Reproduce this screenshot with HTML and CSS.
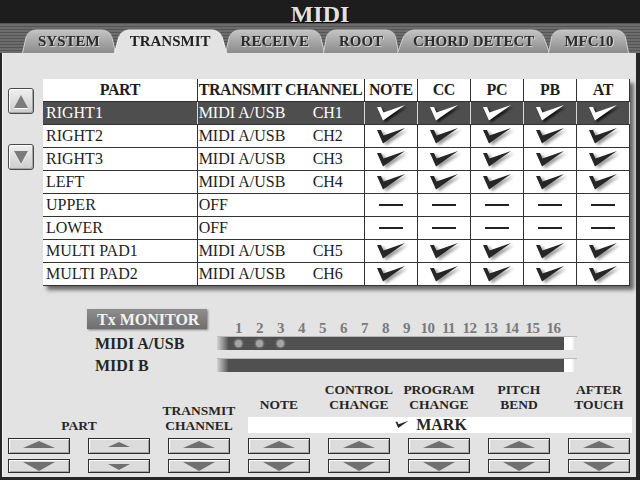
FILE: index.html
```html
<!DOCTYPE html>
<html>
<head>
<meta charset="utf-8">
<title>MIDI</title>
<link rel="stylesheet" href="styles.css">
</head>
<body>
<svg class="defs" width="0" height="0" aria-hidden="true">
  <defs>
    <path id="chk" d="M1 3 L5 3 L7.5 8.5 L29 1 L7 16.5 Z"/>
  </defs>
</svg>
<div class="screen">
  <header class="title">MIDI</header>
  <nav class="tabs">
    <div class="tab">SYSTEM</div>
    <div class="tab active">TRANSMIT</div>
    <div class="tab">RECEIVE</div>
    <div class="tab">ROOT</div>
    <div class="tab">CHORD DETECT</div>
    <div class="tab">MFC10</div>
  </nav>
  <main class="panel">
    <div class="upper">
      <div class="scroll">
        <div class="sbtn sup"></div>
        <div class="sbtn sdn"></div>
      </div>
      <table class="grid">
        <colgroup>
          <col class="c-part"><col class="c-ch"><col class="c-k"><col class="c-k"><col class="c-k"><col class="c-k"><col class="c-k">
        </colgroup>
        <thead>
          <tr><th class="h-part">PART</th><th class="h-ch">TRANSMIT CHANNEL</th><th>NOTE</th><th>CC</th><th>PC</th><th>PB</th><th>AT</th></tr>
        </thead>
        <tbody>
          <tr class="sel"><td class="part">RIGHT1</td><td class="ch"><span class="port">MIDI A/USB</span>CH1</td>
            <td><svg class="ck" viewBox="0 0 30 18"><use href="#chk"/></svg></td><td><svg class="ck" viewBox="0 0 30 18"><use href="#chk"/></svg></td><td><svg class="ck" viewBox="0 0 30 18"><use href="#chk"/></svg></td><td><svg class="ck" viewBox="0 0 30 18"><use href="#chk"/></svg></td><td><svg class="ck" viewBox="0 0 30 18"><use href="#chk"/></svg></td></tr>
          <tr><td class="part">RIGHT2</td><td class="ch"><span class="port">MIDI A/USB</span>CH2</td>
            <td><svg class="ck" viewBox="0 0 30 18"><use href="#chk"/></svg></td><td><svg class="ck" viewBox="0 0 30 18"><use href="#chk"/></svg></td><td><svg class="ck" viewBox="0 0 30 18"><use href="#chk"/></svg></td><td><svg class="ck" viewBox="0 0 30 18"><use href="#chk"/></svg></td><td><svg class="ck" viewBox="0 0 30 18"><use href="#chk"/></svg></td></tr>
          <tr><td class="part">RIGHT3</td><td class="ch"><span class="port">MIDI A/USB</span>CH3</td>
            <td><svg class="ck" viewBox="0 0 30 18"><use href="#chk"/></svg></td><td><svg class="ck" viewBox="0 0 30 18"><use href="#chk"/></svg></td><td><svg class="ck" viewBox="0 0 30 18"><use href="#chk"/></svg></td><td><svg class="ck" viewBox="0 0 30 18"><use href="#chk"/></svg></td><td><svg class="ck" viewBox="0 0 30 18"><use href="#chk"/></svg></td></tr>
          <tr><td class="part">LEFT</td><td class="ch"><span class="port">MIDI A/USB</span>CH4</td>
            <td><svg class="ck" viewBox="0 0 30 18"><use href="#chk"/></svg></td><td><svg class="ck" viewBox="0 0 30 18"><use href="#chk"/></svg></td><td><svg class="ck" viewBox="0 0 30 18"><use href="#chk"/></svg></td><td><svg class="ck" viewBox="0 0 30 18"><use href="#chk"/></svg></td><td><svg class="ck" viewBox="0 0 30 18"><use href="#chk"/></svg></td></tr>
          <tr><td class="part">UPPER</td><td class="ch">OFF</td>
            <td><div class="dash"></div></td><td><div class="dash"></div></td><td><div class="dash"></div></td><td><div class="dash"></div></td><td><div class="dash"></div></td></tr>
          <tr><td class="part">LOWER</td><td class="ch">OFF</td>
            <td><div class="dash"></div></td><td><div class="dash"></div></td><td><div class="dash"></div></td><td><div class="dash"></div></td><td><div class="dash"></div></td></tr>
          <tr><td class="part">MULTI PAD1</td><td class="ch"><span class="port">MIDI A/USB</span>CH5</td>
            <td><svg class="ck" viewBox="0 0 30 18"><use href="#chk"/></svg></td><td><svg class="ck" viewBox="0 0 30 18"><use href="#chk"/></svg></td><td><svg class="ck" viewBox="0 0 30 18"><use href="#chk"/></svg></td><td><svg class="ck" viewBox="0 0 30 18"><use href="#chk"/></svg></td><td><svg class="ck" viewBox="0 0 30 18"><use href="#chk"/></svg></td></tr>
          <tr><td class="part">MULTI PAD2</td><td class="ch"><span class="port">MIDI A/USB</span>CH6</td>
            <td><svg class="ck" viewBox="0 0 30 18"><use href="#chk"/></svg></td><td><svg class="ck" viewBox="0 0 30 18"><use href="#chk"/></svg></td><td><svg class="ck" viewBox="0 0 30 18"><use href="#chk"/></svg></td><td><svg class="ck" viewBox="0 0 30 18"><use href="#chk"/></svg></td><td><svg class="ck" viewBox="0 0 30 18"><use href="#chk"/></svg></td></tr>
        </tbody>
      </table>
    </div>

    <section class="monitor">
      <div class="txlabel">Tx MONITOR</div>
      <div class="nums"><span>1</span><span>2</span><span>3</span><span>4</span><span>5</span><span>6</span><span>7</span><span>8</span><span>9</span><span>10</span><span>11</span><span>12</span><span>13</span><span>14</span><span>15</span><span>16</span></div>
      <div class="mlabel">MIDI A/USB</div>
      <div class="bar"><div class="cap"></div><div class="track"><i class="dot"></i><i class="dot"></i><i class="dot"></i></div><div class="end"></div></div>
      <div class="mlabel">MIDI B</div>
      <div class="bar"><div class="cap"></div><div class="track"></div><div class="end"></div></div>
    </section>

    <section class="controls">
      <div class="lbl l-part">PART</div>
      <div class="lbl l-tc">TRANSMIT<br>CHANNEL</div>
      <div class="lbl l-note">NOTE</div>
      <div class="lbl l-cc">CONTROL<br>CHANGE</div>
      <div class="lbl l-pc">PROGRAM<br>CHANGE</div>
      <div class="lbl l-pb">PITCH<br>BEND</div>
      <div class="lbl l-at">AFTER<br>TOUCH</div>
      <div class="mark"><svg class="mk" viewBox="0 0 30 18"><use href="#chk"/></svg><span>MARK</span></div>

      <div class="btn up"></div>
      <div class="btn up sm"></div>
      <div class="btn up"></div>
      <div class="btn up"></div>
      <div class="btn up"></div>
      <div class="btn up"></div>
      <div class="btn up"></div>
      <div class="btn up"></div>

      <div class="btn dn"></div>
      <div class="btn dn sm"></div>
      <div class="btn dn"></div>
      <div class="btn dn"></div>
      <div class="btn dn"></div>
      <div class="btn dn"></div>
      <div class="btn dn"></div>
      <div class="btn dn"></div>
    </section>
  </main>
</div>
</body>
</html>
```

FILE: styles.css
```css
* { box-sizing: border-box; }
html, body { margin: 0; padding: 0; }
body {
  width: 640px;
  height: 480px;
  overflow: hidden;
  background: #262626;
  font-family: "Liberation Serif", "Times New Roman", serif;
}
.defs { position: absolute; width: 0; height: 0; overflow: hidden; }

.screen { display: flex; flex-direction: column; height: 480px; }

.title {
  height: 23px;
  background: #1d1d1d;
  text-align: center;
  color: #e2e2e2;
  font-weight: bold;
  font-size: 24px;
  line-height: 28px;
  text-shadow: 1px 1px 0 #000;
}

.tabs {
  height: 30px;
  display: flex;
  align-items: flex-end;
  padding-left: 22px;
  background: repeating-linear-gradient(to bottom, #555 0 1px, #6c6c6c 1px 3px);
}
.tab {
  position: relative;
  z-index: 1;
  height: 27px;
  padding: 0 16px;
  margin-right: -2px;
  font-weight: bold;
  font-size: 15px;
  line-height: 31px;
  color: #2c2c2c;
  white-space: nowrap;
  text-shadow: 1px 1px 0 rgba(255,255,255,0.55);
}
.tab::before {
  content: "";
  position: absolute;
  inset: 0;
  z-index: -1;
  background: linear-gradient(#c4c4c4, #8c8c8c);
  border: 1px solid #d0d0d0;
  border-bottom: none;
  border-radius: 10px 10px 0 0;
  transform: perspective(40px) rotateX(11deg);
  transform-origin: bottom;
}
.tab.active { z-index: 3; color: #222; text-shadow: none; }
.tab.active::before { background: #e3e3e3; border-color: #f6f6f6; }

.panel {
  flex: 1;
  margin: 0 4px 3px 2px;
  background: #e3e3e3;
  border-left: 1px solid #f5f5f5;
  padding: 26px 4px 0 5px;
}

.upper { display: flex; gap: 9px; align-items: flex-start; }
.scroll { width: 26px; padding-top: 9px; display: flex; flex-direction: column; gap: 30px; }
.sbtn {
  width: 26px;
  height: 26px;
  border: 1px solid #4a4a4a;
  border-radius: 3px;
  background: linear-gradient(#efefef, #cdcdcd);
  box-shadow: inset 1px 1px 0 #fff, inset -1px -1px 0 #a4a4a4;
  display: flex;
  align-items: center;
  justify-content: center;
}
.sup::after {
  content: "";
  border-left: 7px solid transparent;
  border-right: 7px solid transparent;
  border-bottom: 13px solid #7c7c7c;
  filter: drop-shadow(0 1px 0 #fff);
}
.sdn::after {
  content: "";
  border-left: 7px solid transparent;
  border-right: 7px solid transparent;
  border-top: 13px solid #7c7c7c;
  filter: drop-shadow(0 1px 0 #fff);
}

.grid {
  border-collapse: collapse;
  table-layout: fixed;
  width: 587px;
  background: #fff;
  box-shadow: 4px 4px 4px rgba(0,0,0,0.55);
}
.c-part { width: 154px; }
.c-ch { width: 167px; }
.c-k { width: 53px; }
.grid th, .grid td {
  border: 1px solid #333;
  padding: 0;
  height: 23px;
  color: #1e1e1e;
  font-size: 16px;
  white-space: nowrap;
  overflow: hidden;
}
.grid th {
  height: 22px;
  border-top: none;
  font-weight: bold;
  letter-spacing: -0.4px;
  text-align: center;
  line-height: 20px;
}
.grid th.h-ch { text-align: left; padding-left: 1px; }
.grid th:first-child, .grid td:first-child { border-left: none; }
.grid td { font-weight: normal; line-height: 21px; }
.grid td.part { padding-left: 3px; }
.grid td.ch { padding-left: 1px; }
.port { display: inline-block; width: 114px; }
.sel td { background: #4e4e4e; color: #fff; border-left-color: #d8d8d8; border-right-color: #d8d8d8; }

.ck {
  display: block;
  width: 30px;
  height: 18px;
  margin: 0 auto;
  overflow: visible;
  fill: #262626;
  filter: drop-shadow(3px 2px 1.5px rgba(0,0,0,0.4));
}
.sel .ck { fill: #fff; filter: drop-shadow(2px 2px 1px rgba(0,0,0,0.75)); }
.dash { width: 24px; height: 2px; background: #222; margin: 0 auto; }

.monitor {
  margin: 23px 0 0 79px;
  display: grid;
  grid-template-columns: 130px 360px;
  grid-template-rows: 27px 22px 14px;
}
.txlabel {
  width: 120px;
  height: 20px;
  background: linear-gradient(#8e8e8e, #6e6e6e);
  box-shadow: 1px 1px 2px rgba(0,0,0,0.45);
  color: #f2f2f2;
  font-weight: bold;
  font-size: 16px;
  line-height: 21px;
  padding-left: 10px;
  white-space: nowrap;
}
.nums { display: flex; padding-left: 11px; align-self: end; padding-bottom: 1px; }
.nums span {
  width: 21px;
  text-align: center;
  font-weight: bold;
  font-size: 15px;
  line-height: 13px;
  color: #7a7a7a;
  letter-spacing: -0.5px;
}
.mlabel {
  padding-left: 8px;
  font-weight: bold;
  font-size: 16px;
  line-height: 15px;
  color: #262626;
  white-space: nowrap;
  align-self: start;
}
.bar { height: 14px; display: flex; align-self: start; border-top: 1px solid #b8b8b8; }
.bar .cap { width: 11px; background: linear-gradient(to right, #d4d4d4, #5a5a5a); }
.bar .track {
  width: 336px;
  background: #505050;
  display: flex;
  align-items: center;
  gap: 14px;
  padding-left: 7px;
}
.bar .end { width: 12px; background: linear-gradient(to right, #fff 60%, #dcdcdc); }
.dot {
  width: 7px;
  height: 7px;
  border-radius: 50%;
  background: #a4a4a4;
  box-shadow: 0 0 2px 1px rgba(170,170,170,0.6);
}

.controls {
  margin-top: 12px;
  display: grid;
  grid-template-columns: repeat(8, 62px);
  grid-template-rows: 28px 16px 16px 14px;
  column-gap: 18px;
  row-gap: 5px;
}
.lbl {
  align-self: end;
  margin: 0 -14px;
  text-align: center;
  font-weight: bold;
  font-size: 13.5px;
  line-height: 15px;
  color: #262626;
  white-space: nowrap;
}
.l-part { grid-column: 1 / 3; grid-row: 1 / 3; }
.l-tc { grid-column: 3; grid-row: 1 / 3; }
.l-note { grid-column: 4; grid-row: 1; }
.l-cc { grid-column: 5; grid-row: 1; }
.l-pc { grid-column: 6; grid-row: 1; }
.l-pb { grid-column: 7; grid-row: 1; }
.l-at { grid-column: 8; grid-row: 1; }
.mark {
  grid-column: 4 / 9;
  grid-row: 2;
  margin-right: -2px;
  background: #fff;
  display: flex;
  align-items: center;
  justify-content: center;
  gap: 7px;
  padding-right: 18px;
  font-weight: bold;
  font-size: 16px;
  line-height: 16px;
  color: #262626;
}
.mk { width: 14px; height: 9px; fill: #262626; }

.btn {
  border: 1px solid #2c2c2c;
  background: #dcdcdc;
  box-shadow: inset 1px 1px 0 #fafafa, inset -1px -1px 0 #a6a6a6;
  display: flex;
  align-items: center;
  justify-content: center;
}
.btn.up { grid-row: 3; }
.btn.dn { grid-row: 4; }
.btn.up::after {
  content: "";
  border-left: 16px solid transparent;
  border-right: 16px solid transparent;
  border-bottom: 7px solid #707070;
  margin-bottom: 3px;
}
.btn.dn::after {
  content: "";
  border-left: 16px solid transparent;
  border-right: 16px solid transparent;
  border-top: 9px solid #707070;
  margin-top: 2px;
}
.btn.sm.up::after { border-left-width: 11px; border-right-width: 11px; border-bottom-width: 5px; }
.btn.sm.dn::after { border-left-width: 11px; border-right-width: 11px; border-top-width: 6px; }
```
